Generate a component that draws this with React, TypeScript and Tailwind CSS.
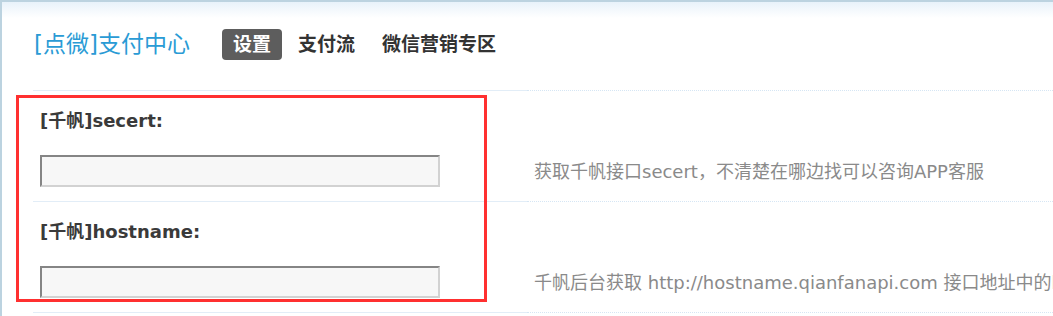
import React from 'react';

const font = { fontFamily: '"DejaVu Sans", "Noto Sans CJK SC", sans-serif' };

const tabs = [
    { label: '设置', active: true },
    { label: '支付流', active: false },
    { label: '微信营销专区', active: false },
];

const fields = [
    {
        label: '[千帆]secert:',
        help: '获取千帆接口secert，不清楚在哪边找可以咨询APP客服',
    },
    {
        label: '[千帆]hostname:',
        help: '千帆后台获取 http://hostname.qianfanapi.com 接口地址中的hostname部分',
    },
];

export default function App() {
    return (
        <div
            className="relative w-[1053px] h-[316px] overflow-hidden border-l-2 border-t-2 border-[#bcd3e0] bg-[linear-gradient(to_bottom,#e8f2fa,#ffffff_16px)]"
            style={font}
        >
            {/* header */}
            <div className="flex items-center h-[88px] pb-1 pl-[32px]">
                <h1 className="w-[188px] shrink-0 text-[23px] leading-[30px] text-[#2a9bd5] whitespace-nowrap">
                    [点微]支付中心
                </h1>
                <div className="flex items-center gap-[5px]">
                    {tabs.map((tab) => (
                        <span
                            key={tab.label}
                            className={
                                tab.active
                                    ? 'h-[31px] px-[11px] flex items-center rounded-[4px] bg-[#5d5d5d] text-white text-[19px] font-bold whitespace-nowrap'
                                    : 'h-[31px] px-[11px] flex items-center text-[#333333] text-[19px] font-bold whitespace-nowrap'
                            }
                        >
                            {tab.label}
                        </span>
                    ))}
                </div>
            </div>

            {/* form table */}
            <div className="ml-[31px]">
                <div className="flex">
                    <div className="w-[494px] border-b border-[#e2edf7]" />
                    <div className="flex-1 border-b border-dotted border-[#d6e6f4]" />
                </div>
                {fields.map((field) => (
                    <div key={field.label} className="flex h-[111px]">
                        <div className="w-[494px] shrink-0 pl-[7px] pt-[18px] border-b border-[#e2edf7]">
                            <div className="text-[18px] leading-[24px] font-bold text-[#3a3a3a] whitespace-nowrap">
                                {field.label}
                            </div>
                            <input
                                type="text"
                                className="mt-[22px] block w-[400px] h-[32px] border-2 border-t-[#858585] border-l-[#858585] border-b-[#d2d2d2] border-r-[#d2d2d2] bg-[#f7f7f7] outline-none"
                            />
                        </div>
                        <div className="flex-1 min-w-0 pl-[7px] pt-[69px] border-b border-dotted border-[#d6e6f4]">
                            <div className="text-[18px] leading-[24px] text-[#8a8a8a] whitespace-nowrap">
                                {field.help}
                            </div>
                        </div>
                    </div>
                ))}
            </div>

            {/* red annotation box */}
            <div className="absolute left-[14px] top-[93px] w-[471px] h-[207px] border-[3px] border-[#ff3030] pointer-events-none" />
        </div>
    );
}
